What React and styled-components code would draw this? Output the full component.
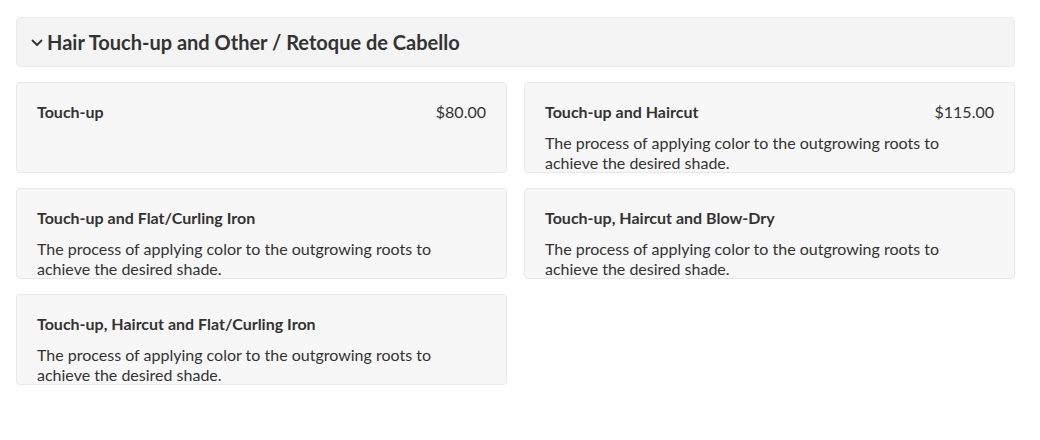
import React from 'react'
import styled, { createGlobalStyle } from 'styled-components'

const GlobalStyle = createGlobalStyle`
    body {
        margin: 0;
        background: #ffffff;
        font-family: 'Lato', 'Liberation Sans', sans-serif;
        color: #333333;
    }
`;

const desc = 'The process of applying color to the outgrowing roots to achieve the desired shade.'

const services = [
    { id: 1, name: 'Touch-up', price: '$80.00' },
    { id: 2, name: 'Touch-up and Haircut', price: '$115.00', desc },
    { id: 3, name: 'Touch-up and Flat/Curling Iron', desc },
    { id: 4, name: 'Touch-up, Haircut and Blow-Dry', desc },
    { id: 5, name: 'Touch-up, Haircut and Flat/Curling Iron', desc },
]

export default function App() {
  return (
      <Page>
        <GlobalStyle/>
        <Header>
            <svg width="12" height="8" viewBox="0 0 12 8">
                <path d="M1.5 1.5 L6 6 L10.5 1.5" fill="none" stroke="#333" strokeWidth="1.8" strokeLinecap="round" strokeLinejoin="round"/>
            </svg>
            <Title>Hair Touch-up and Other / Retoque de Cabello</Title>
        </Header>
        <Grid>
            {services.map((s) =>{
                return (
                    <Card key={s.id}>
                        <Top>
                            <Name>{s.name}</Name>
                            {s.price && <Price>{s.price}</Price>}
                        </Top>
                        {s.desc && <Desc>{s.desc}</Desc>}
                    </Card>
                )
            })}
        </Grid>
      </Page>
  )
}

const Page = styled.div`
    padding: 17px 25px 0 16px;
    display: flex;
    flex-direction: column;
    gap: 15px;
`;

const Header = styled.div`
    display: flex;
    align-items: center;
    gap: 4px;
    height: 48px;
    padding: 0 14px;
    background-color: #f4f4f4;
    border: 1px solid #ebebeb;
    border-radius: 4px;

    svg{
        margin-top: 1px;
    }
`;

const Title = styled.h2`
    margin: 0;
    font-size: 20px;
    font-weight: 700;
    color: #333;
`;

const Grid = styled.div`
    display: grid;
    grid-template-columns: repeat(2, minmax(0, 1fr));
    gap: 15px 17px;
`;

const Card = styled.div`
    height: 89px;
    overflow: hidden;
    box-sizing: content-box;
    padding: 0 20px;
    background-color: #f7f7f7;
    border: 1px solid #e8e8e8;
    border-radius: 4px;
`;

const Top = styled.div`
    display: flex;
    justify-content: space-between;
    align-items: center;
    margin-top: 18px;
    height: 20px;
`;

const Name = styled.div`
    font-size: 16px;
    font-weight: 700;
`;

const Price = styled.div`
    font-size: 16px;
    font-weight: 400;
`;

const Desc = styled.p`
    margin: 12px 0 0;
    font-size: 16px;
    line-height: 20px;
    width: 410px;
`;
